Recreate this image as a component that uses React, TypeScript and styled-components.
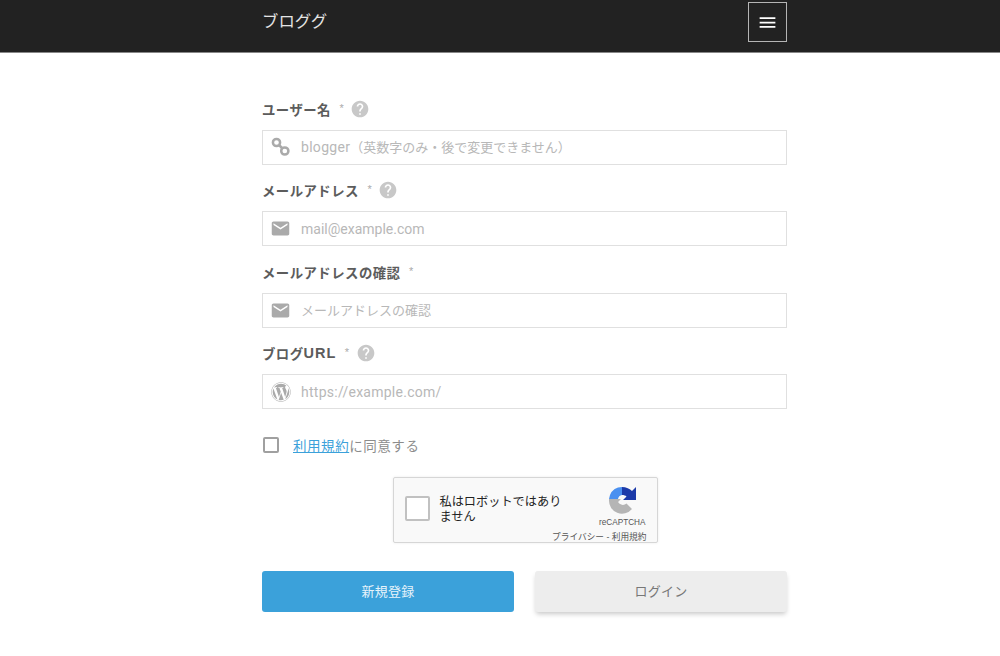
import React from 'react';
import styled, { createGlobalStyle } from 'styled-components';
import { MdEmail, MdHelp, MdMenu } from 'react-icons/md';
import { FaWordpress } from 'react-icons/fa';

const JP = `"Liberation Sans", "Noto Sans CJK JP", sans-serif`;

const GlobalStyle = createGlobalStyle`
  html, body { margin: 0; padding: 0; background: #fff; }
  body { font-family: ${JP}; }
  * { box-sizing: border-box; }
`;

const Header = styled.header`
  height: 53px;
  background: #222;
  border-bottom: 1px solid #888;
`;

const HeaderInner = styled.div`
  width: 525px;
  margin-left: 262px;
  padding-top: 2px;
  display: flex;
  justify-content: space-between;
  align-items: flex-start;
`;

const Brand = styled.div`
  color: #e4e4e4;
  font-size: 16.4px;
  line-height: 38px;
`;

const MenuButton = styled.div`
  width: 39px;
  height: 40px;
  border: 1px solid #b5b5b5;
  display: flex;
  align-items: center;
  justify-content: center;
  color: #fff;
`;

const Main = styled.main`
  width: 525px;
  margin-left: 262px;
  padding: 45.5px 0 30px;
`;

const Field = styled.div`
  height: 81.5px;
`;

const LabelRow = styled.div`
  display: flex;
  align-items: center;
  height: 20px;
  margin-bottom: 11px;
  color: #5c5c5c;
  font-size: 13.4px;
  font-weight: 700;
  letter-spacing: 0.45px;
`;

const LatinLabel = styled.span`
  font-size: 14.5px;
  letter-spacing: 1px;
`;

const Required = styled.span`
  color: #aaa;
  font-size: 11px;
  font-weight: 400;
  margin-left: 8.5px;
  position: relative;
  top: -1px;
`;

const HelpIcon = styled(MdHelp)`
  color: #c8c8c8;
  margin-left: 6px;
`;

const InputBox = styled.div`
  height: 35px;
  border: 1px solid #e0e0e0;
  display: flex;
  align-items: center;
  color: #b8b8b8;
  font-size: 13px;
`;

const LatinHolder = styled.span<{ $spacing?: number }>`
  font-family: Roboto, sans-serif;
  font-size: 14px;
  letter-spacing: ${(p) => p.$spacing ?? 0}px;
`;

const Holder = styled.span`
  position: relative;
  top: -1px;
`;

const IconSlot = styled.span`
  width: 38px;
  flex: none;
  display: flex;
  justify-content: center;
  padding-right: 3px;
  color: #aaa;
`;

const Agree = styled.div`
  display: flex;
  align-items: center;
  margin-top: 10.5px;
  height: 20px;
  color: #8c8c8c;
  font-size: 13.5px;
  letter-spacing: 0.55px;
`;

const CheckBox = styled.span`
  width: 16px;
  height: 16px;
  margin: 0 14px 0 1px;
  border: 2px solid #a0a0a0;
  border-radius: 2px;
`;

const TermsLink = styled.a`
  color: #3ba1da;
  text-decoration: underline;
`;

const CaptchaWrap = styled.div`
  display: flex;
  justify-content: center;
  margin: 21.5px 0 28px 1px;
`;

const Captcha = styled.div`
  width: 265px;
  height: 66px;
  background: #f9f9f9;
  border: 1px solid #d6d6d6;
  border-radius: 2px;
  box-shadow: 0 0 3px rgba(0, 0, 0, 0.08);
  display: flex;
  position: relative;
  color: #222;
`;

const CaptchaBox = styled.span`
  width: 25px;
  height: 25px;
  margin: 18px 10px 0 11px;
  flex: none;
  background: #fff;
  border: 2px solid #c1c1c1;
  border-radius: 2px;
`;

const CaptchaText = styled.div`
  width: 130px;
  margin-top: 17px;
  font-size: 12.2px;
  line-height: 15px;
`;

const CaptchaMark = styled.svg`
  position: absolute;
  left: 214px;
  top: 8.5px;
`;

const CaptchaBrand = styled.div`
  position: absolute;
  right: 11px;
  top: 40px;
  font-size: 8.2px;
  color: #555;
`;

const CaptchaLinks = styled.div`
  position: absolute;
  right: 10px;
  top: 52px;
  font-size: 8.7px;
  color: #555;
  white-space: nowrap;
`;

const Buttons = styled.div`
  display: grid;
  grid-template-columns: 252px 252px;
  justify-content: space-between;
`;

const Button = styled.div<{ $primary?: boolean }>`
  height: 41px;
  padding-bottom: 2px;
  border-radius: 3px;
  display: flex;
  align-items: center;
  justify-content: center;
  font-size: 13px;
  letter-spacing: 0.2px;
  background: ${(p) => (p.$primary ? '#3ba1da' : '#ededed')};
  color: ${(p) => (p.$primary ? '#e6f3fb' : '#777')};
  box-shadow: ${(p) => (p.$primary ? 'none' : '0 3px 5px -1px rgba(0,0,0,0.22)')};
`;

const LinkIcon = () => (
  <svg width="20" height="20" viewBox="0 0 20 20" fill="none" stroke="#aaa" strokeWidth="2.5">
    <circle cx="5.5" cy="5.5" r="3.6" />
    <circle cx="13.8" cy="14" r="3.6" />
    <path d="M8 8l3.5 3.5" />
  </svg>
);

const fields = [
  {
    label: <>ユーザー名</>,
    help: true,
    icon: <LinkIcon />,
    placeholder: (
      <Holder>
        <LatinHolder $spacing={0.3}>blogger</LatinHolder>（英数字のみ・後で変更できません）
      </Holder>
    ),
  },
  { label: <>メールアドレス</>, help: true, icon: <MdEmail size={21} />, placeholder: <LatinHolder>mail@example.com</LatinHolder> },
  { label: <>メールアドレスの確認</>, help: false, icon: <MdEmail size={21} />, placeholder: <Holder>メールアドレスの確認</Holder> },
  {
    label: (
      <>
        ブログ<LatinLabel>URL</LatinLabel>
      </>
    ),
    help: true,
    icon: <FaWordpress size={20} />,
    placeholder: <LatinHolder $spacing={0.26}>https://example.com/</LatinHolder>,
  },
];

const App = () => (
  <>
    <GlobalStyle />
    <Header>
      <HeaderInner>
        <Brand>ブロググ</Brand>
        <MenuButton>
          <MdMenu size={21} />
        </MenuButton>
      </HeaderInner>
    </Header>
    <Main>
      {fields.map((f, i) => (
        <Field key={i}>
          <LabelRow>
            {f.label}
            <Required>*</Required>
            {f.help && <HelpIcon size={20} />}
          </LabelRow>
          <InputBox>
            <IconSlot>{f.icon}</IconSlot>
            {f.placeholder}
          </InputBox>
        </Field>
      ))}
      <Agree>
        <CheckBox />
        <TermsLink>利用規約</TermsLink>に同意する
      </Agree>
      <CaptchaWrap>
        <Captcha>
          <CaptchaBox />
          <CaptchaText>私はロボットではありません</CaptchaText>
          <CaptchaMark width="28" height="28" viewBox="0 0 28 28">
            <path d="M14 1A13 13 0 0 0 2 9L1 13H10A5 5 0 0 1 14 9Z" fill="#4a90f0" />
            <path d="M14 1C18 1 22 3 24 5L28 1V14H15L18.5 10.5C17.5 9.5 16 9 14 9Z" fill="#1c3aa9" />
            <path d="M1 13V14A13 13 0 0 0 24 23L18.5 17.5A5.5 5.5 0 0 1 10 16L13 13Z" fill="#b5b5b5" />
          </CaptchaMark>
          <CaptchaBrand>reCAPTCHA</CaptchaBrand>
          <CaptchaLinks>プライバシー - 利用規約</CaptchaLinks>
        </Captcha>
      </CaptchaWrap>
      <Buttons>
        <Button $primary>新規登録</Button>
        <Button>ログイン</Button>
      </Buttons>
    </Main>
  </>
);

export default App;
